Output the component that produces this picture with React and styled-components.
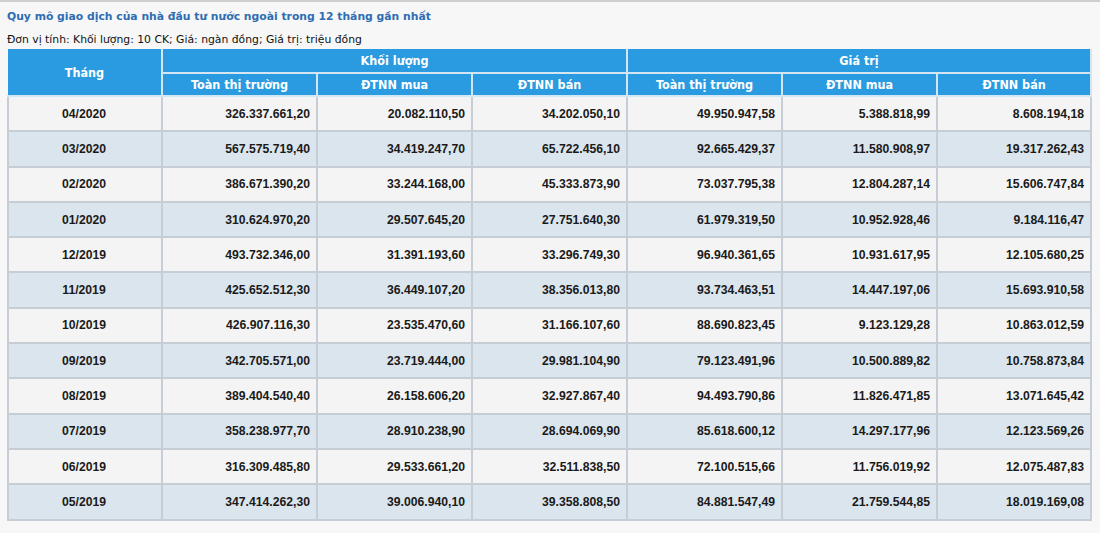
import React from 'react';
import styled, { createGlobalStyle } from 'styled-components';

const GlobalStyle = createGlobalStyle`
  html, body {
    margin: 0;
    padding: 0;
    background: #f7f7f7;
  }
`;

const rows = [
  ['04/2020', '326.337.661,20', '20.082.110,50', '34.202.050,10', '49.950.947,58', '5.388.818,99', '8.608.194,18'],
  ['03/2020', '567.575.719,40', '34.419.247,70', '65.722.456,10', '92.665.429,37', '11.580.908,97', '19.317.262,43'],
  ['02/2020', '386.671.390,20', '33.244.168,00', '45.333.873,90', '73.037.795,38', '12.804.287,14', '15.606.747,84'],
  ['01/2020', '310.624.970,20', '29.507.645,20', '27.751.640,30', '61.979.319,50', '10.952.928,46', '9.184.116,47'],
  ['12/2019', '493.732.346,00', '31.391.193,60', '33.296.749,30', '96.940.361,65', '10.931.617,95', '12.105.680,25'],
  ['11/2019', '425.652.512,30', '36.449.107,20', '38.356.013,80', '93.734.463,51', '14.447.197,06', '15.693.910,58'],
  ['10/2019', '426.907.116,30', '23.535.470,60', '31.166.107,60', '88.690.823,45', '9.123.129,28', '10.863.012,59'],
  ['09/2019', '342.705.571,00', '23.719.444,00', '29.981.104,90', '79.123.491,96', '10.500.889,82', '10.758.873,84'],
  ['08/2019', '389.404.540,40', '26.158.606,20', '32.927.867,40', '94.493.790,86', '11.826.471,85', '13.071.645,42'],
  ['07/2019', '358.238.977,70', '28.910.238,90', '28.694.069,90', '85.618.600,12', '14.297.177,96', '12.123.569,26'],
  ['06/2019', '316.309.485,80', '29.533.661,20', '32.511.838,50', '72.100.515,66', '11.756.019,92', '12.075.487,83'],
  ['05/2019', '347.414.262,30', '39.006.940,10', '39.358.808,50', '84.881.547,49', '21.759.544,85', '18.019.169,08'],
];

const colWidths = [154, 155, 155, 155, 155, 155, 154];

const Page = styled.div`
  width: 1100px;
  height: 533px;
  box-sizing: border-box;
  border-top: 2px solid #cfcfcf;
  padding: 0 0 0 7px;
`;

const Title = styled.h3`
  margin: 0;
  padding-top: 7px;
  height: 22px;
  font-family: 'DejaVu Sans', Verdana, sans-serif;
  font-size: 10.8px;
  font-weight: bold;
  color: #2f6db2;
  line-height: 16px;
`;

const Unit = styled.div`
  font-family: 'DejaVu Sans', Tahoma, sans-serif;
  font-size: 10.8px;
  color: #111;
  height: 18px;
  line-height: 17px;
`;

const Table = styled.table`
  border-collapse: collapse;
  table-layout: fixed;
  width: 1083px;
`;

const Head = styled.th`
  background: #2a9be0;
  color: #fff;
  font-family: 'Liberation Sans Narrow', 'DejaVu Sans Condensed', 'Liberation Sans', sans-serif;
  font-size: 12.5px;
  font-weight: bold;
  text-align: center;
  padding: 0;
  height: ${(p) => p.$h || 22}px;
  border: 2px solid #d3e6f4;
  border-top: none;
  &:first-child {
    border-left: none;
  }
`;

const Row = styled.tr`
  background: ${(p) => (p.$alt ? '#dbe5ed' : '#f4f4f4')};
`;

const Cell = styled.td`
  font-family: 'Liberation Sans', Arial, sans-serif;
  font-size: 12.2px;
  font-weight: bold;
  color: #1a1a1a;
  height: 33.3px;
  padding: 0 6px 0 4px;
  text-align: ${(p) => (p.$center ? 'center' : 'right')};
  border: 2px solid #c6cdd4;
`;

export default function App() {
  return (
    <>
      <GlobalStyle />
      <Page>
        <Title>Quy mô giao dịch của nhà đầu tư nước ngoài trong 12 tháng gần nhất</Title>
        <Unit>Đơn vị tính: Khối lượng: 10 CK; Giá: ngàn đồng; Giá trị: triệu đồng</Unit>
        <Table>
          <colgroup>
            {colWidths.map((w, i) => (
              <col key={i} style={{ width: w }} />
            ))}
          </colgroup>
          <thead>
            <tr>
              <Head rowSpan={2}>Tháng</Head>
              <Head colSpan={3} $h={23}>Khối lượng</Head>
              <Head colSpan={3} $h={23}>Giá trị</Head>
            </tr>
            <tr>
              <Head $h={21}>Toàn thị trường</Head>
              <Head $h={21}>ĐTNN mua</Head>
              <Head $h={21}>ĐTNN bán</Head>
              <Head $h={21}>Toàn thị trường</Head>
              <Head $h={21}>ĐTNN mua</Head>
              <Head $h={21}>ĐTNN bán</Head>
            </tr>
          </thead>
          <tbody>
            {rows.map((r, i) => (
              <Row key={r[0]} $alt={i % 2 === 1}>
                {r.map((v, j) => (
                  <Cell key={j} $center={j === 0}>{v}</Cell>
                ))}
              </Row>
            ))}
          </tbody>
        </Table>
      </Page>
    </>
  );
}
